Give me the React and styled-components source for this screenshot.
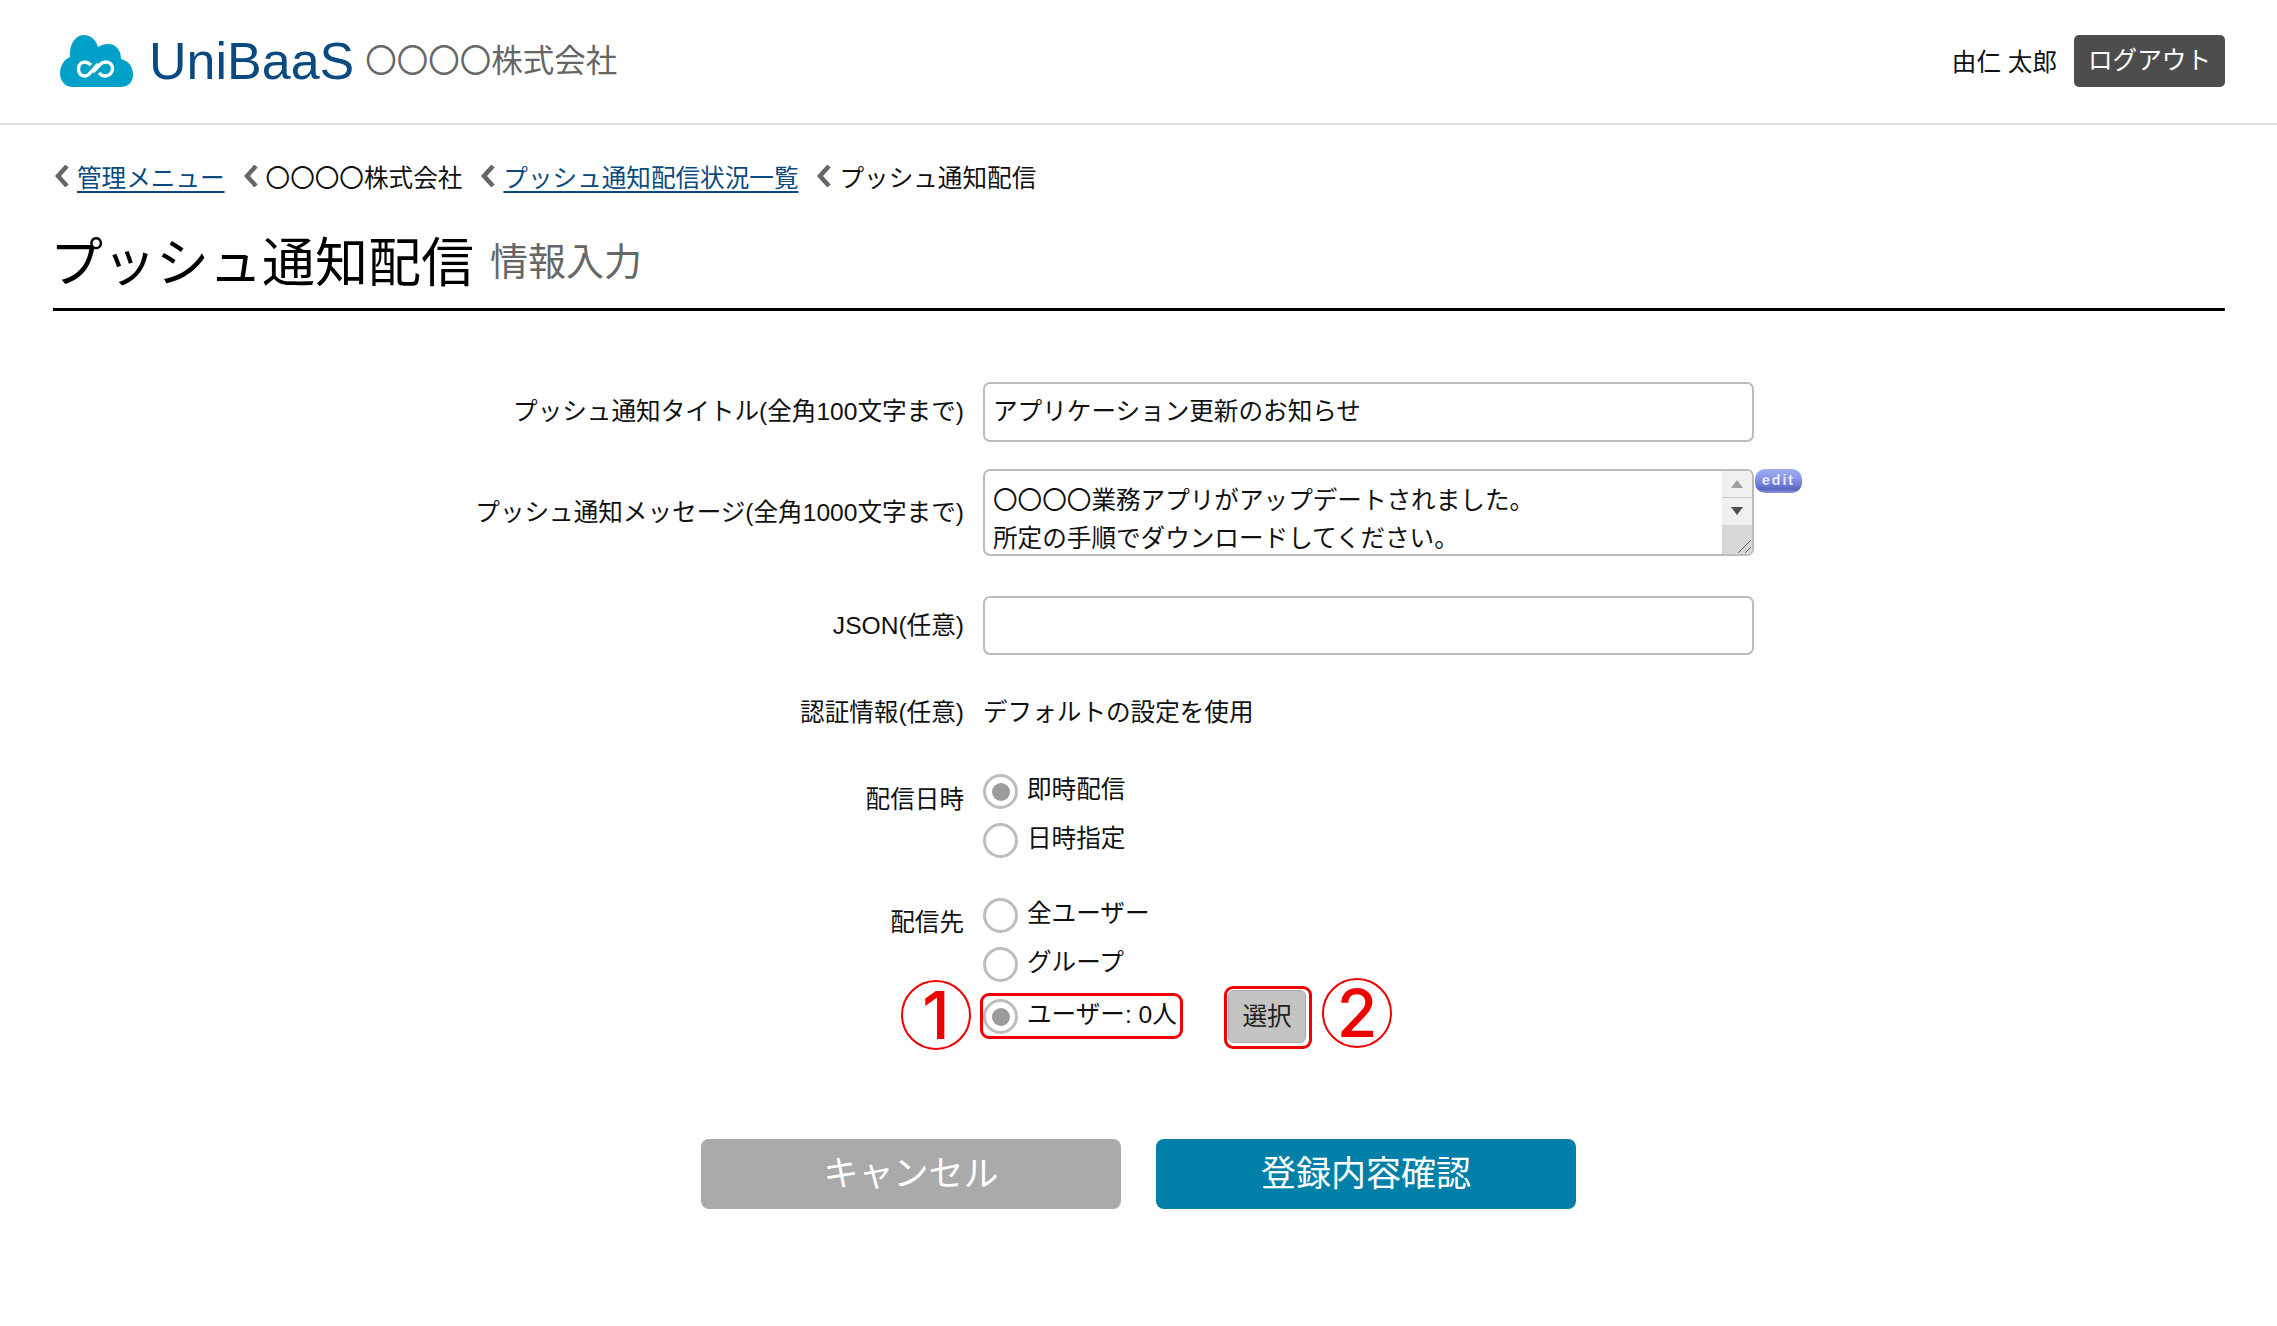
import React from "react";
import styled, { createGlobalStyle } from "styled-components";

const GlobalStyle = createGlobalStyle`
  html, body {
    margin: 0;
    padding: 0;
    background: #fff;
    color: #111;
    font-family: "Liberation Sans", "Noto Sans CJK JP", sans-serif;
    font-size: 24.6px;
  }
  * { box-sizing: border-box; }
`;

const Header = styled.header`
  height: 125px;
  padding: 0 52px 2px 60px;
  display: flex;
  align-items: center;
  justify-content: space-between;
  border-bottom: 2px solid #e2e2e2;
`;

const Brand = styled.div`
  display: flex;
  align-items: center;
`;

const BrandName = styled.span`
  margin-left: 14px;
  font-size: 52px;
  line-height: 60px;
  color: #0b4a80;
`;

const Company = styled.span`
  margin: 0 0 5px 11px;
  font-size: 31.5px;
  color: #666;
`;

const UserBox = styled.div`
  display: flex;
  align-items: center;
  gap: 17px;
`;

const UserName = styled.span`
  margin-bottom: 2px;
  font-size: 24.6px;
`;

const Logout = styled.button`
  width: 151px;
  height: 52px;
  padding: 0 0 6px;
  border: 0;
  border-radius: 5px;
  background: #4d4d4d;
  color: #fff;
  font: inherit;
  font-size: 24.6px;
`;

const Main = styled.main`
  padding: 0 52px 0 53px;
`;

const Breadcrumb = styled.nav`
  display: flex;
  align-items: center;
  height: 36px;
  margin-top: 33px;
`;

const Crumb = styled.span`
  display: flex;
  align-items: center;
  margin-right: 17px;
`;

const Chevron = styled.svg`
  width: 16px;
  height: 22px;
  margin-right: 8px;
  fill: none;
  stroke: #666;
  stroke-width: 4.5;
`;

const CrumbLink = styled.a`
  color: #0b4a80;
  text-decoration: underline;
  text-underline-offset: 4px;
`;

const TitleBar = styled.div`
  display: flex;
  align-items: center;
  gap: 16px;
  height: 94px;
  margin-top: 23px;
  border-bottom: 3px solid #000;
`;

const Title = styled.h1`
  margin: 0 0 8px -3px;
  font-size: 53px;
  font-weight: 400;
  color: #000;
`;

const SubTitle = styled.span`
  margin-bottom: 8px;
  font-size: 38px;
  color: #666;
`;

const Form = styled.form`
  padding-top: 71px;
`;

const Row = styled.div`
  display: grid;
  grid-template-columns: 911px 771px;
  column-gap: 19px;
  margin-bottom: ${(p) => p.$gap || 0}px;
`;

const Label = styled.label`
  text-align: right;
  align-self: ${(p) => (p.$top ? "start" : "center")};
  margin-top: ${(p) => p.$offset || 0}px;
  line-height: 34px;
`;

const TextInput = styled.div`
  height: ${(p) => p.$height || 60}px;
  padding: 12px 8px;
  line-height: 32px;
  border: 2px solid #bbb;
  border-radius: 7px;
  background: #fff;
`;

const TextAreaBox = styled.div`
  position: relative;
  height: 87px;
  padding: 11px 8px 0;
  line-height: 38px;
  overflow: hidden;
  border: 2px solid #bbb;
  border-radius: 7px;
`;

const Scrollbar = styled.div`
  position: absolute;
  top: 0;
  right: 0;
  bottom: 0;
  width: 30px;
  display: flex;
  flex-direction: column;
  background: #f0f0f0;
`;

const ScrollButton = styled.div`
  height: 27px;
  padding-bottom: 1px;
  display: flex;
  align-items: center;
  justify-content: center;
  border-bottom: ${(p) => (p.$line ? "1px solid #c8c8c8" : "0")};
`;

const Arrow = styled.span`
  width: 0;
  height: 0;
  border-left: 6px solid transparent;
  border-right: 6px solid transparent;
  border-${(p) => (p.$up ? "bottom" : "top")}: 8px solid ${(p) => (p.$up ? "#a0a0a0" : "#505050")};
`;

const ScrollThumb = styled.div`
  flex: 1;
  background: #d8d8d8;
  display: flex;
  align-items: flex-end;
  justify-content: flex-end;
`;

const EditBadge = styled.span`
  position: absolute;
  top: 0;
  left: calc(100% + 1px);
  width: 47px;
  height: 24px;
  border-radius: 10px;
  background: linear-gradient(#a0aeee 0%, #8796e4 40%, #5a68c0 85%, #8a96dc 100%);
  color: #e8ecff;
  font-family: "Liberation Sans", sans-serif;
  font-size: 14px;
  font-weight: 700;
  letter-spacing: 2px;
  line-height: 22px;
  text-align: center;
`;

const AreaWrap = styled.div`
  position: relative;
`;

const PlainValue = styled.div`
  line-height: 34px;
`;

const RadioList = styled.div`
  display: flex;
  flex-direction: column;
`;

const RadioRow = styled.div`
  position: relative;
  display: flex;
  align-items: center;
  height: 35px;
  margin-bottom: ${(p) => p.$gap || 14}px;
`;

const Radio = styled.span`
  width: 35px;
  height: 35px;
  flex: none;
  display: flex;
  align-items: center;
  justify-content: center;
  border: 3.5px solid #bdbdbd;
  border-radius: 50%;
  background: #fff;
  &::after {
    content: "";
    display: ${(p) => (p.$on ? "block" : "none")};
    width: 18px;
    height: 18px;
    border-radius: 50%;
    background: #9c9c9c;
  }
`;

const RadioText = styled.span`
  margin: -4px 0 0 9px;
  line-height: 34px;
`;

const PickButton = styled.button`
  position: absolute;
  left: 245px;
  top: -9px;
  width: 78px;
  height: 53px;
  padding: 0 0 6px;
  border: 1.5px solid #a8a8a8;
  border-radius: 6px;
  background: #c4c4c4;
  color: #222;
  font: inherit;
`;

const RedFrame = styled.span`
  position: absolute;
  left: ${(p) => p.$left}px;
  top: ${(p) => p.$top}px;
  width: ${(p) => p.$width}px;
  height: ${(p) => p.$height}px;
  border: 3px solid #f00000;
  border-radius: 9px;
`;

const RedNumber = styled.span`
  position: absolute;
  left: ${(p) => p.$left}px;
  top: ${(p) => p.$top}px;
  width: 70px;
  height: 70px;
  display: flex;
  align-items: center;
  justify-content: center;
  border: 2.5px solid #f00000;
  border-radius: 50%;
  color: #f00000;
  font-family: Inter, "Liberation Sans", sans-serif;
  font-size: 66px;
  font-weight: 500;
  line-height: 1;
`;

const Actions = styled.div`
  display: flex;
  justify-content: center;
  gap: 35px;
  margin: 91px 0 0;
  padding-right: 1px;
`;

const ActionButton = styled.button`
  width: 420px;
  height: 70px;
  padding: 0 0 8px;
  border: 0;
  border-radius: 8px;
  background: ${(p) => (p.$primary ? "#0080a8" : "#aaaaaa")};
  color: #fff;
  font: inherit;
  font-size: 35px;
`;

const Logo = () => (
  <svg width="75" height="52" viewBox="0 0 75 52">
    <path
      fill="#00a0c8"
      d="M13 52C5 52 0 46 0 38C0 30 5 24 10 22C9 10 15 0 24 0C31 0 36 5 38 12C41 10 45 9 48 9C56 9 61 15 61 24C69 26 73 32 73 40C73 47 68 52 61 52Z"
    />
    <path
      fill="none"
      stroke="#fff"
      strokeWidth="3.4"
      d="M33 37L40 29.5C42 27.5 44 27 46 27C50 27 52.5 30 52.5 34C52.5 38 49 41 45 41C43 41 41 40 39 38M38 29L31 37C29 39.5 27 41 25 41C21 41 18.5 38 18.5 34C18.5 30 21 27 25 27C27 27 29 28 31 30"
    />
  </svg>
);

const Crumbs = [
  { text: "管理メニュー", link: true },
  { text: "〇〇〇〇株式会社" },
  { text: "プッシュ通知配信状況一覧", link: true },
  { text: "プッシュ通知配信" },
];

const App = () => {
  return (
    <>
      <GlobalStyle />
      <Header>
        <Brand>
          <Logo />
          <BrandName>UniBaaS</BrandName>
          <Company>〇〇〇〇株式会社</Company>
        </Brand>
        <UserBox>
          <UserName>由仁 太郎</UserName>
          <Logout type="button">ログアウト</Logout>
        </UserBox>
      </Header>
      <Main>
        <Breadcrumb>
          {Crumbs.map((c) => (
            <Crumb key={c.text}>
              <Chevron viewBox="0 0 16 22">
                <path d="M14 1 L5 11 L14 21" />
              </Chevron>
              {c.link ? <CrumbLink href="#">{c.text}</CrumbLink> : c.text}
            </Crumb>
          ))}
        </Breadcrumb>
        <TitleBar>
          <Title>プッシュ通知配信</Title>
          <SubTitle>情報入力</SubTitle>
        </TitleBar>
        <Form>
          <Row $gap={27}>
            <Label>プッシュ通知タイトル(全角100文字まで)</Label>
            <TextInput>アプリケーション更新のお知らせ</TextInput>
          </Row>
          <Row $gap={40}>
            <Label>プッシュ通知メッセージ(全角1000文字まで)</Label>
            <AreaWrap>
              <TextAreaBox>
                〇〇〇〇業務アプリがアップデートされました。
                <br />
                所定の手順でダウンロードしてください。
                <Scrollbar>
                  <ScrollButton $line>
                    <Arrow $up />
                  </ScrollButton>
                  <ScrollButton>
                    <Arrow />
                  </ScrollButton>
                  <ScrollThumb>
                    <svg width="16" height="16" viewBox="0 0 16 16">
                      <path d="M2 15L15 2M9 15l6-6" stroke="#666" strokeWidth="1" />
                    </svg>
                  </ScrollThumb>
                </Scrollbar>
              </TextAreaBox>
              <EditBadge>edit</EditBadge>
            </AreaWrap>
          </Row>
          <Row $gap={41}>
            <Label>JSON(任意)</Label>
            <TextInput $height={59} />
          </Row>
          <Row $gap={44}>
            <Label>認証情報(任意)</Label>
            <PlainValue>デフォルトの設定を使用</PlainValue>
          </Row>
          <Row $gap={26}>
            <Label $top $offset={9}>配信日時</Label>
            <RadioList>
              <RadioRow>
                <Radio $on />
                <RadioText>即時配信</RadioText>
              </RadioRow>
              <RadioRow>
                <Radio />
                <RadioText>日時指定</RadioText>
              </RadioRow>
            </RadioList>
          </Row>
          <Row>
            <Label $top $offset={8}>配信先</Label>
            <RadioList>
              <RadioRow>
                <Radio />
                <RadioText>全ユーザー</RadioText>
              </RadioRow>
              <RadioRow $gap={17}>
                <Radio />
                <RadioText>グループ</RadioText>
              </RadioRow>
              <RadioRow>
                <Radio $on />
                <RadioText>ユーザー: 0人</RadioText>
                <PickButton type="button">選択</PickButton>
                <RedFrame $left={-3} $top={-6} $width={203} $height={46} />
                <RedFrame $left={241} $top={-13} $width={88} $height={63} />
                <RedNumber $left={-82} $top={-19}>1</RedNumber>
                <RedNumber $left={339} $top={-21}>2</RedNumber>
              </RadioRow>
            </RadioList>
          </Row>
          <Actions>
            <ActionButton type="button">キャンセル</ActionButton>
            <ActionButton type="button" $primary>登録内容確認</ActionButton>
          </Actions>
        </Form>
      </Main>
    </>
  );
};

export default App;
